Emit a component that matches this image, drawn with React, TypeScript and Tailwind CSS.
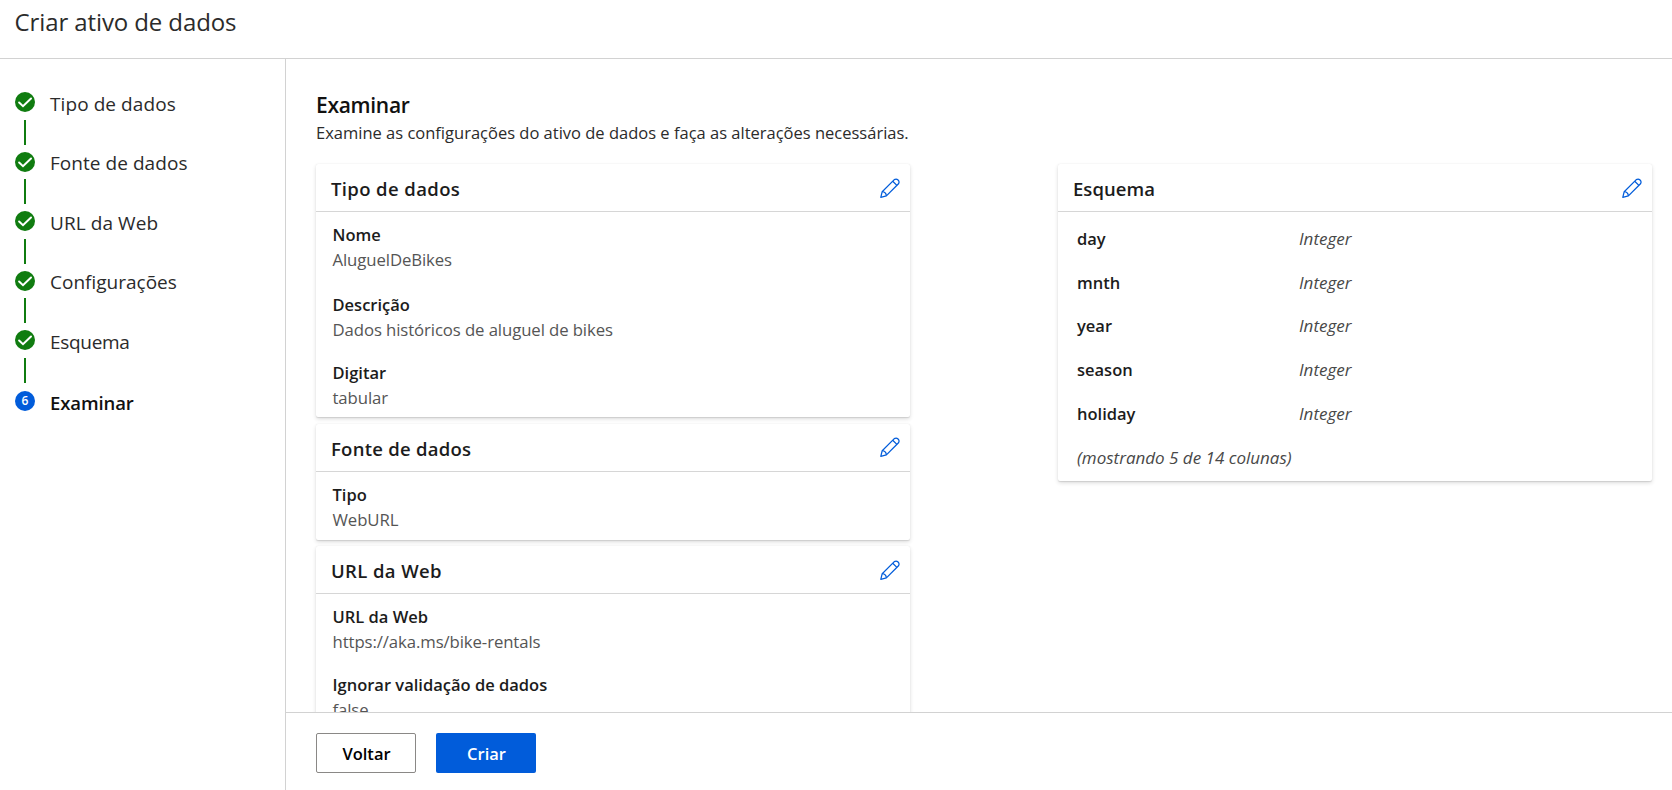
import { clsx } from 'clsx';
import type { ReactNode } from 'react';

const steps = [
  { label: 'Tipo de dados', gap: 'mb-[40px]', text: 'pt-[3px] tracking-[0.08px]', line: 'top-[28px]' },
  { label: 'Fonte de dados', gap: 'mb-[39px]', text: 'pt-[1px] tracking-[0.05px]', line: 'top-[27px]' },
  { label: 'URL da Web', gap: 'mb-[40px]', text: 'pt-[3px] tracking-[0.08px]', line: 'top-[28px]' },
  { label: 'Configurações', gap: 'mb-[39px]', text: 'pt-[1px]', line: 'top-[27px]' },
  { label: 'Esquema', gap: 'mb-[41px]', text: 'pt-[3px] tracking-[-0.3px]', line: 'top-[28px]' },
];

const columns = [
  { name: 'day', height: 'h-[44px]' },
  { name: 'mnth', height: 'h-[43px]' },
  { name: 'year', height: 'h-[44px]' },
  { name: 'season', height: 'h-[44px]' },
  { name: 'holiday', height: 'h-[44px]' },
];

function CheckCircle() {
  return (
    <svg viewBox="0 0 20 20" className="size-5 shrink-0">
      <circle cx="10" cy="10" r="10" fill="#107c10" />
      <path d="M4.1 10.5 8 14.2 16 6.5" fill="none" stroke="#fff" strokeWidth="2" strokeLinecap="round" />
    </svg>
  );
}

function Pencil() {
  return (
    <svg
      viewBox="0 0 20 20"
      className="size-5"
      fill="none"
      stroke="#015cda"
      strokeWidth="1.25"
      strokeLinejoin="round"
    >
      <path d="M.8 19.3 2.2 13.7 14.3 1.6a3.05 3.05 0 0 1 4.2 4.2L6.4 17.9Z" />
      <path d="M12.7 3.2 16.9 7.4M2.2 13.7c2.2.2 4 2 4.2 4.2" />
    </svg>
  );
}

interface CardProps {
  title: string;
  titleClassName?: string;
  className?: string;
  iconClassName?: string;
  children: ReactNode;
}

function Card({ title, titleClassName = 'tracking-[0.38px]', className, iconClassName, children }: CardProps) {
  return (
    <section
      className={clsx(
        'w-[594px] shrink-0 rounded-[2px] bg-white shadow-[0_2px_4.5px_rgba(0,0,0,0.132),0_0.4px_1.1px_rgba(0,0,0,0.108)]',
        className,
      )}
    >
      <header className="flex h-12 items-center justify-between border-b border-[#d6d6d6] pr-[10px] pl-[15px]">
        <h3 className={clsx('pt-[3px] text-[18.5px] leading-6 font-semibold text-[#1c1c1c]', titleClassName)}>
          {title}
        </h3>
        <button type="button" aria-label="Editar" className={iconClassName}>
          <Pencil />
        </button>
      </header>
      {children}
    </section>
  );
}

function Field({ label, value, className }: { label: string; value: string; className?: string }) {
  return (
    <div className={clsx('leading-[25px]', className)}>
      <div className="text-[16.5px] font-semibold text-[#1c1c1c]">{label}</div>
      <div className="text-[16.75px] tracking-[-0.1px] text-[#555]">{value}</div>
    </div>
  );
}

export default function App() {
  return (
    <div className="flex h-[790px] w-full flex-col overflow-hidden bg-white font-['Open_Sans','Noto_Sans',sans-serif] text-[#2b2b2b]">
      <header className="h-[59px] shrink-0 border-b border-[#d2d2d2] pt-[6px] pl-[14.5px]">
        <h1 className="text-[24px] leading-8 tracking-[-0.1px]">Criar ativo de dados</h1>
      </header>

      <div className="flex min-h-0 flex-1">
        <nav className="w-[286px] shrink-0 border-r border-[#d2d2d2] pt-[33px] pl-[15px]">
          {steps.map((step) => (
            <div key={step.label} className={clsx('relative flex h-5 items-center gap-[15px]', step.gap)}>
              <CheckCircle />
              <span className={clsx('text-[19px] leading-5', step.text)}>{step.label}</span>
              <i className={clsx('absolute left-[9px] h-[25px] w-[2px] bg-[#107c10]', step.line)} />
            </div>
          ))}
          <div className="flex h-5 items-center gap-[15px]">
            <span className="flex size-5 items-center justify-center rounded-full bg-[#015cda] text-[12px] leading-5 font-semibold text-white">
              6
            </span>
            <span className="pt-[3px] text-[18.5px] leading-5 font-semibold tracking-[-0.1px] text-[#111]">Examinar</span>
          </div>
        </nav>

        <main className="flex min-w-0 flex-1 flex-col">
          <div className="min-h-0 flex-1 overflow-hidden pt-[32px] pl-[30px]">
            <h2 className="text-[21px] leading-7 font-semibold tracking-[-0.3px] text-[#111]">Examinar</h2>
            <p className="pt-px text-[16.5px] leading-[26px]">
              Examine as configurações do ativo de dados e faça as alterações necessárias.
            </p>

            <div className="mt-[18px] flex items-start gap-[148px]">
              <div className="flex flex-col">
                <Card title="Tipo de dados">
                  <div className="px-[16.5px] pt-[10px] pb-[7px]">
                    <Field label="Nome" value="AluguelDeBikes" />
                    <Field label="Descrição" value="Dados históricos de aluguel de bikes" className="mt-5" />
                    <Field label="Digitar" value="tabular" className="mt-[18px]" />
                  </div>
                </Card>
                <Card title="Fonte de dados" titleClassName="tracking-[0.25px]" className="mt-[7px]" iconClassName="mb-[2px]">
                  <div className="px-[16.5px] pt-[10px] pb-2">
                    <Field label="Tipo" value="WebURL" />
                  </div>
                </Card>
                <Card title="URL da Web" className="mt-[6px]">
                  <div className="px-[16.5px] pt-[10px] pb-2">
                    <Field label="URL da Web" value="https://aka.ms/bike-rentals" />
                    <Field label="Ignorar validação de dados" value="false" className="mt-[18px]" />
                  </div>
                </Card>
              </div>

              <Card title="Esquema" titleClassName="tracking-[0.05px]">
                <div className="px-[19px] pt-[14px] pb-[11px] text-[16.5px] leading-[25px]">
                  {columns.map(({ name, height }) => (
                    <div key={name} className={clsx('flex', height)}>
                      <span className="w-[222px] font-semibold text-[#1c1c1c]">{name}</span>
                      <span className="text-[17px] text-[#484848] italic">Integer</span>
                    </div>
                  ))}
                  <div className="text-[17px] text-[#484848] italic">(mostrando 5 de 14 colunas)</div>
                </div>
              </Card>
            </div>
          </div>

          <footer className="flex h-[78px] shrink-0 gap-5 border-t border-[#d2d2d2] pt-[20px] pl-[30px] text-[16.5px] font-semibold">
            <button
              type="button"
              className="h-10 w-[100px] rounded-[2px] border border-[#8a8886] pt-[2px] pl-px text-black"
            >
              Voltar
            </button>
            <button type="button" className="h-10 w-[100px] rounded-[2px] bg-[#015cda] pt-[2px] pl-px text-white">
              Criar
            </button>
          </footer>
        </main>
      </div>
    </div>
  );
}
